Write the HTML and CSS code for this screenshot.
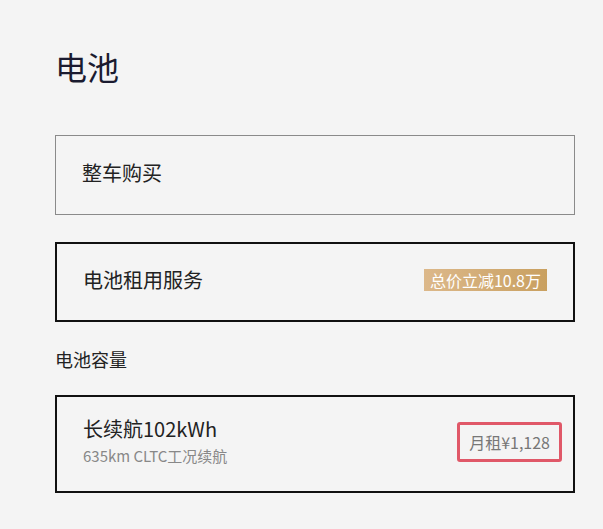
FILE: index.html
```html
<!DOCTYPE html>
<html lang="zh-CN">
<head>
    <meta charset="UTF-8">
    <meta name="viewport" content="width=device-width, initial-scale=1.0">
    <title>电池</title>
    <link rel="stylesheet" href="styles.css">
</head>
<body>

    <div class="container">
        <h1>电池</h1>

        <div class="option plain">
            <span class="option-name">整车购买</span>
        </div>

        <div class="option selected">
            <span class="option-name">电池租用服务</span>
            <span class="tag">总价立减10.8万</span>
        </div>

        <p class="label">电池容量</p>

        <div class="option selected tall">
            <div class="info">
                <span class="option-name">长续航102kWh</span>
                <span class="sub">635km CLTC工况续航</span>
            </div>
            <span class="price">月租¥1,128</span>
        </div>
    </div>

</body>
</html>
```

FILE: styles.css
```css
body {
    margin: 0;
    font-family: "Noto Sans CJK SC", "Liberation Sans", sans-serif;
    background-color: #f4f4f4;
}
.container {
    width: 520px;
    padding: 43px 0 0 55px;
}
h1 {
    margin: 0 0 46px;
    font-size: 32px;
    font-weight: 400;
    line-height: 46px;
    color: #1b1b30;
}
.option {
    box-sizing: border-box;
    display: flex;
    align-items: center;
    justify-content: space-between;
    height: 80px;
    padding: 0 26px 5px;
    margin-bottom: 27px;
}
.plain {
    border: 1px solid #8a8a8a;
}
.selected {
    border: 2px solid #111;
}
.tall {
    height: 98px;
    padding-right: 11px;
}
.option-name {
    font-size: 20px;
    color: #222;
}
.tag {
    padding: 1px 6px;
    font-size: 16px;
    line-height: 20px;
    color: #fff;
    background: linear-gradient(90deg, #dcb88a, #c9a060);
}
.label {
    margin: 0 0 26px;
    font-size: 18px;
    line-height: 20px;
    color: #222;
}
.info {
    display: flex;
    flex-direction: column;
    gap: 2px;
    margin-top: -4px;
}
.sub {
    font-size: 15px;
    color: #888;
}
.price {
    padding: 5px 9px;
    font-size: 16px;
    color: #777;
    border: 3px solid #e05868;
    border-radius: 3px;
}
```
